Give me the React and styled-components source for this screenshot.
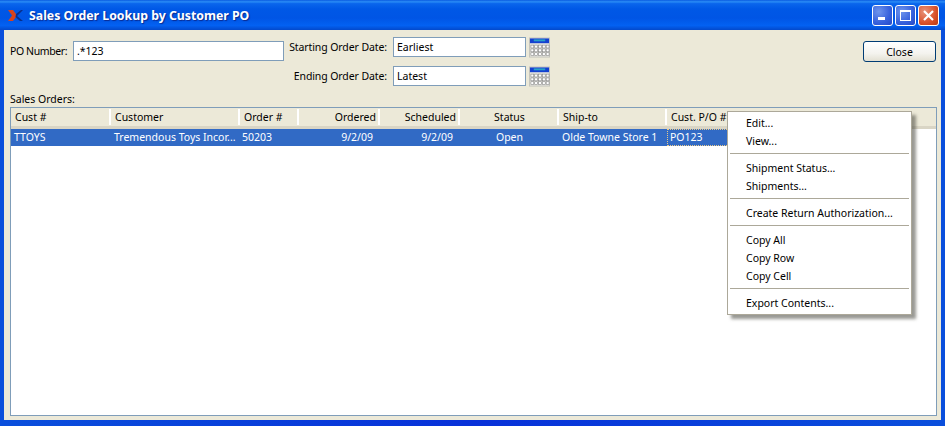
import React from 'react';
import styled, { createGlobalStyle } from 'styled-components';

const Global = createGlobalStyle`
  html, body { margin: 0; padding: 0; background: #0a50d8; }
  body { font-family: "Noto Sans", "Liberation Sans", sans-serif; font-size: 10.5px; color: #000; }
  * { box-sizing: border-box; }
`;

const Win = styled.div`
  width: 945px; height: 426px; display: flex; flex-direction: column; overflow: hidden; position: relative;
  background: linear-gradient(90deg, #0a4fdc 0%, #0831d9 50%, #0a4fdc 100%);
`;
const TitleBar = styled.div`
  height: 30px; flex: none; display: flex; align-items: center; padding: 0 6px 0 8px;
  background: linear-gradient(180deg, #0a5be0 0%, #2a8cf6 6%, #0a66ec 12%, #0058e6 30%, #0055e5 60%, #0361f2 85%, #0349cc 100%);
`;
const TitleText = styled.div`
  margin-left: 6px; flex: 1; color: #fff; font: bold 12.300px "Noto Sans", sans-serif;
  text-shadow: 1px 1px 1px #0a2a90; white-space: nowrap;
`;
const Caption = styled.div`
  width: 21px; height: 21px; margin-left: 2px; border: 1px solid #fff; border-radius: 3px; display: flex;
  align-items: center; justify-content: center;
  background: ${p => p.$close
    ? 'radial-gradient(circle at 30% 30%, #e8937a, #d9512a 60%, #b83a12)'
    : 'radial-gradient(circle at 30% 30%, #6f95ec, #3660dc 60%, #2549c6)'};
`;
const Frame = styled.div`
  flex: 1; min-height: 0; display: flex; flex-direction: column; margin: 0 4px 6px 4px; background: #ece9d8;
  padding: 7px 4px 4px 6px;
`;
const FormRow = styled.div`
  display: flex; align-items: flex-start; height: 57px; flex: none;
`;
const PoGroup = styled.div`
  display: grid; grid-template-columns: 63px 211px; align-items: center; margin-top: 4px; height: 20px;
`;
const Label = styled.span`
  white-space: nowrap;
  letter-spacing: ${p => p.$tight ? '-0.4px' : '-0.1px'};
`;
const Input = styled.div`
  height: 20px; background: #fff; border: 1px solid #7f9db9; padding-left: 3px;
  display: flex; align-items: center;
`;
const DateGroup = styled.div`
  display: grid; grid-template-columns: 105px 133px 24px; grid-auto-rows: 20px; row-gap: 9px; margin-left: 4px;
  align-items: center;
`;
const DateLabel = styled(Label)`
  text-align: right; padding-right: 6px;
`;
const CalWrap = styled.div`
  padding-left: 3px; display: flex; align-items: center;
`;
const CloseBtn = styled.div`
  width: 73px; height: 21px; margin-left: auto; margin-top: 4px; margin-right: 1px; border: 1px solid #003c74; border-radius: 3px;
  background: linear-gradient(180deg, #fff 0%, #f4f3ee 60%, #e3e0d3 100%); display: flex; align-items: center; justify-content: center;
`;
const SectionLabel = styled.div`
  height: 13px; line-height: 11px; flex: none;
`;
const Panel = styled.div`
  flex: 1; min-height: 0; background: #fff; border: 1px solid #7f9db9; overflow: hidden;
`;
const cols = '100px 129px 59px 81px 80px 99px 108px 100px';
const Header = styled.div`
  height: 21px; background: #ece9d8; border-bottom: 3px solid #d9d5c5; display: grid; grid-template-columns: ${cols} 1fr; align-items: center;
`;
const HeadCell = styled.div`
  height: 16px; line-height: 16px; padding: 0 2px 0 4px; text-align: ${p => p.$align || 'left'}; white-space: nowrap; overflow: hidden;
  border-right: ${p => p.$last ? '0' : '2px'} solid; border-image: linear-gradient(90deg, #d6d2c2 50%, #fff 50%) 1;
`;
const Row = styled.div`
  height: 17px; display: grid; grid-template-columns: ${cols}; width: max-content; background: #316ac5; color: #fff;
`;
const Cell = styled.div`
  padding: 0 ${p => p.$align === 'right' ? '7px' : '3px'} 0 ${p => p.$tightLeft ? '2px' : '3px'}; line-height: 16px; text-align: ${p => p.$align || 'left'}; white-space: nowrap; overflow: hidden;
  ${p => p.$focus && 'outline: 1px dotted #e8c98a; outline-offset: -1px;'}
`;
const Menu = styled.div`
  position: absolute; left: 727px; top: 111px; width: 185px; padding: 2px; background: #fff; border: 1px solid #aca899;
  box-shadow: 4px 4px 3px rgba(70,70,60,.55);
`;
const Item = styled.div`
  height: 18px; line-height: 18px; padding-left: 16px; white-space: nowrap;
`;
const Sep = styled.div`
  height: 9px; padding-top: 3px;
  &::before { content: ""; display: block; height: 1px; background: #aca899; }
`;

const Logo = () => (
  <svg width="15" height="13" viewBox="0 0 15 13">
    <path d="M0 1h5l4 5.500-4 5.500H0l4-5.500z" fill="#d8431c" />
    <path d="M8 5l5-4h2L9 7l6 5h-3L7.500 8z" fill="#0a2f8a" />
  </svg>
);
const Calendar = () => {
  const xs = [2, 6, 10, 14, 18];
  const ys = [8, 12, 16];
  return (
    <svg width="22" height="21" viewBox="0 0 22 21">
      <rect x="0.500" y="0.500" width="21" height="20" fill="#e6e6e0" stroke="#c4c4bc" />
      <rect x="1" y="1" width="20" height="5" fill="#1440d0" />
      <rect x="5" y="2" width="12" height="2" fill="#2aa0c8" />
      {ys.map(y => xs.map(x => <rect key={`${x}-${y}`} x={x} y={y} width="3" height="3" fill="#fff" stroke="#808080" strokeWidth="0.600" />))}
    </svg>
  );
};

export default function App() {
  return (
    <Win>
      <Global />
      <TitleBar>
        <Logo />
        <TitleText>Sales Order Lookup by Customer PO</TitleText>
        <Caption>
          <svg width="13" height="13" viewBox="0 0 13 13"><rect x="2" y="8" width="7" height="3" fill="#fff" /></svg>
        </Caption>
        <Caption>
          <svg width="13" height="13" viewBox="0 0 13 13"><rect x="1.500" y="2.500" width="10" height="9" fill="none" stroke="#fff" /><rect x="1" y="1" width="11" height="2" fill="#fff" /></svg>
        </Caption>
        <Caption $close>
          <svg width="13" height="13" viewBox="0 0 13 13"><path d="M2 2l9 9M11 2l-9 9" stroke="#fff" strokeWidth="2.200" /></svg>
        </Caption>
      </TitleBar>
      <Frame>
        <FormRow>
          <PoGroup>
            <Label $tight>PO Number:</Label>
            <Input>.*123</Input>
          </PoGroup>
          <DateGroup>
            <DateLabel>Starting Order Date:</DateLabel>
            <Input>Earliest</Input>
            <CalWrap><Calendar /></CalWrap>
            <DateLabel>Ending Order Date:</DateLabel>
            <Input>Latest</Input>
            <CalWrap><Calendar /></CalWrap>
          </DateGroup>
          <CloseBtn>Close</CloseBtn>
        </FormRow>
        <SectionLabel>Sales Orders:</SectionLabel>
        <Panel>
          <Header>
            <HeadCell>Cust #</HeadCell>
            <HeadCell>Customer</HeadCell>
            <HeadCell>Order #</HeadCell>
            <HeadCell $align="right">Ordered</HeadCell>
            <HeadCell $align="right">Scheduled</HeadCell>
            <HeadCell $align="center">Status</HeadCell>
            <HeadCell>Ship-to</HeadCell>
            <HeadCell $last>Cust. P/O #</HeadCell>
          </Header>
          <Row>
            <Cell>TTOYS</Cell>
            <Cell>Tremendous Toys Incor...</Cell>
            <Cell $tightLeft>50203</Cell>
            <Cell $align="right">9/2/09</Cell>
            <Cell $align="right">9/2/09</Cell>
            <Cell $align="center">Open</Cell>
            <Cell>Olde Towne Store 1</Cell>
            <Cell $focus>PO123</Cell>
          </Row>
        </Panel>
      </Frame>
      <Menu>
        <Item>Edit...</Item>
        <Item>View...</Item>
        <Sep />
        <Item>Shipment Status...</Item>
        <Item>Shipments...</Item>
        <Sep />
        <Item>Create Return Authorization...</Item>
        <Sep />
        <Item>Copy All</Item>
        <Item>Copy Row</Item>
        <Item>Copy Cell</Item>
        <Sep />
        <Item>Export Contents...</Item>
      </Menu>
    </Win>
  );
}
